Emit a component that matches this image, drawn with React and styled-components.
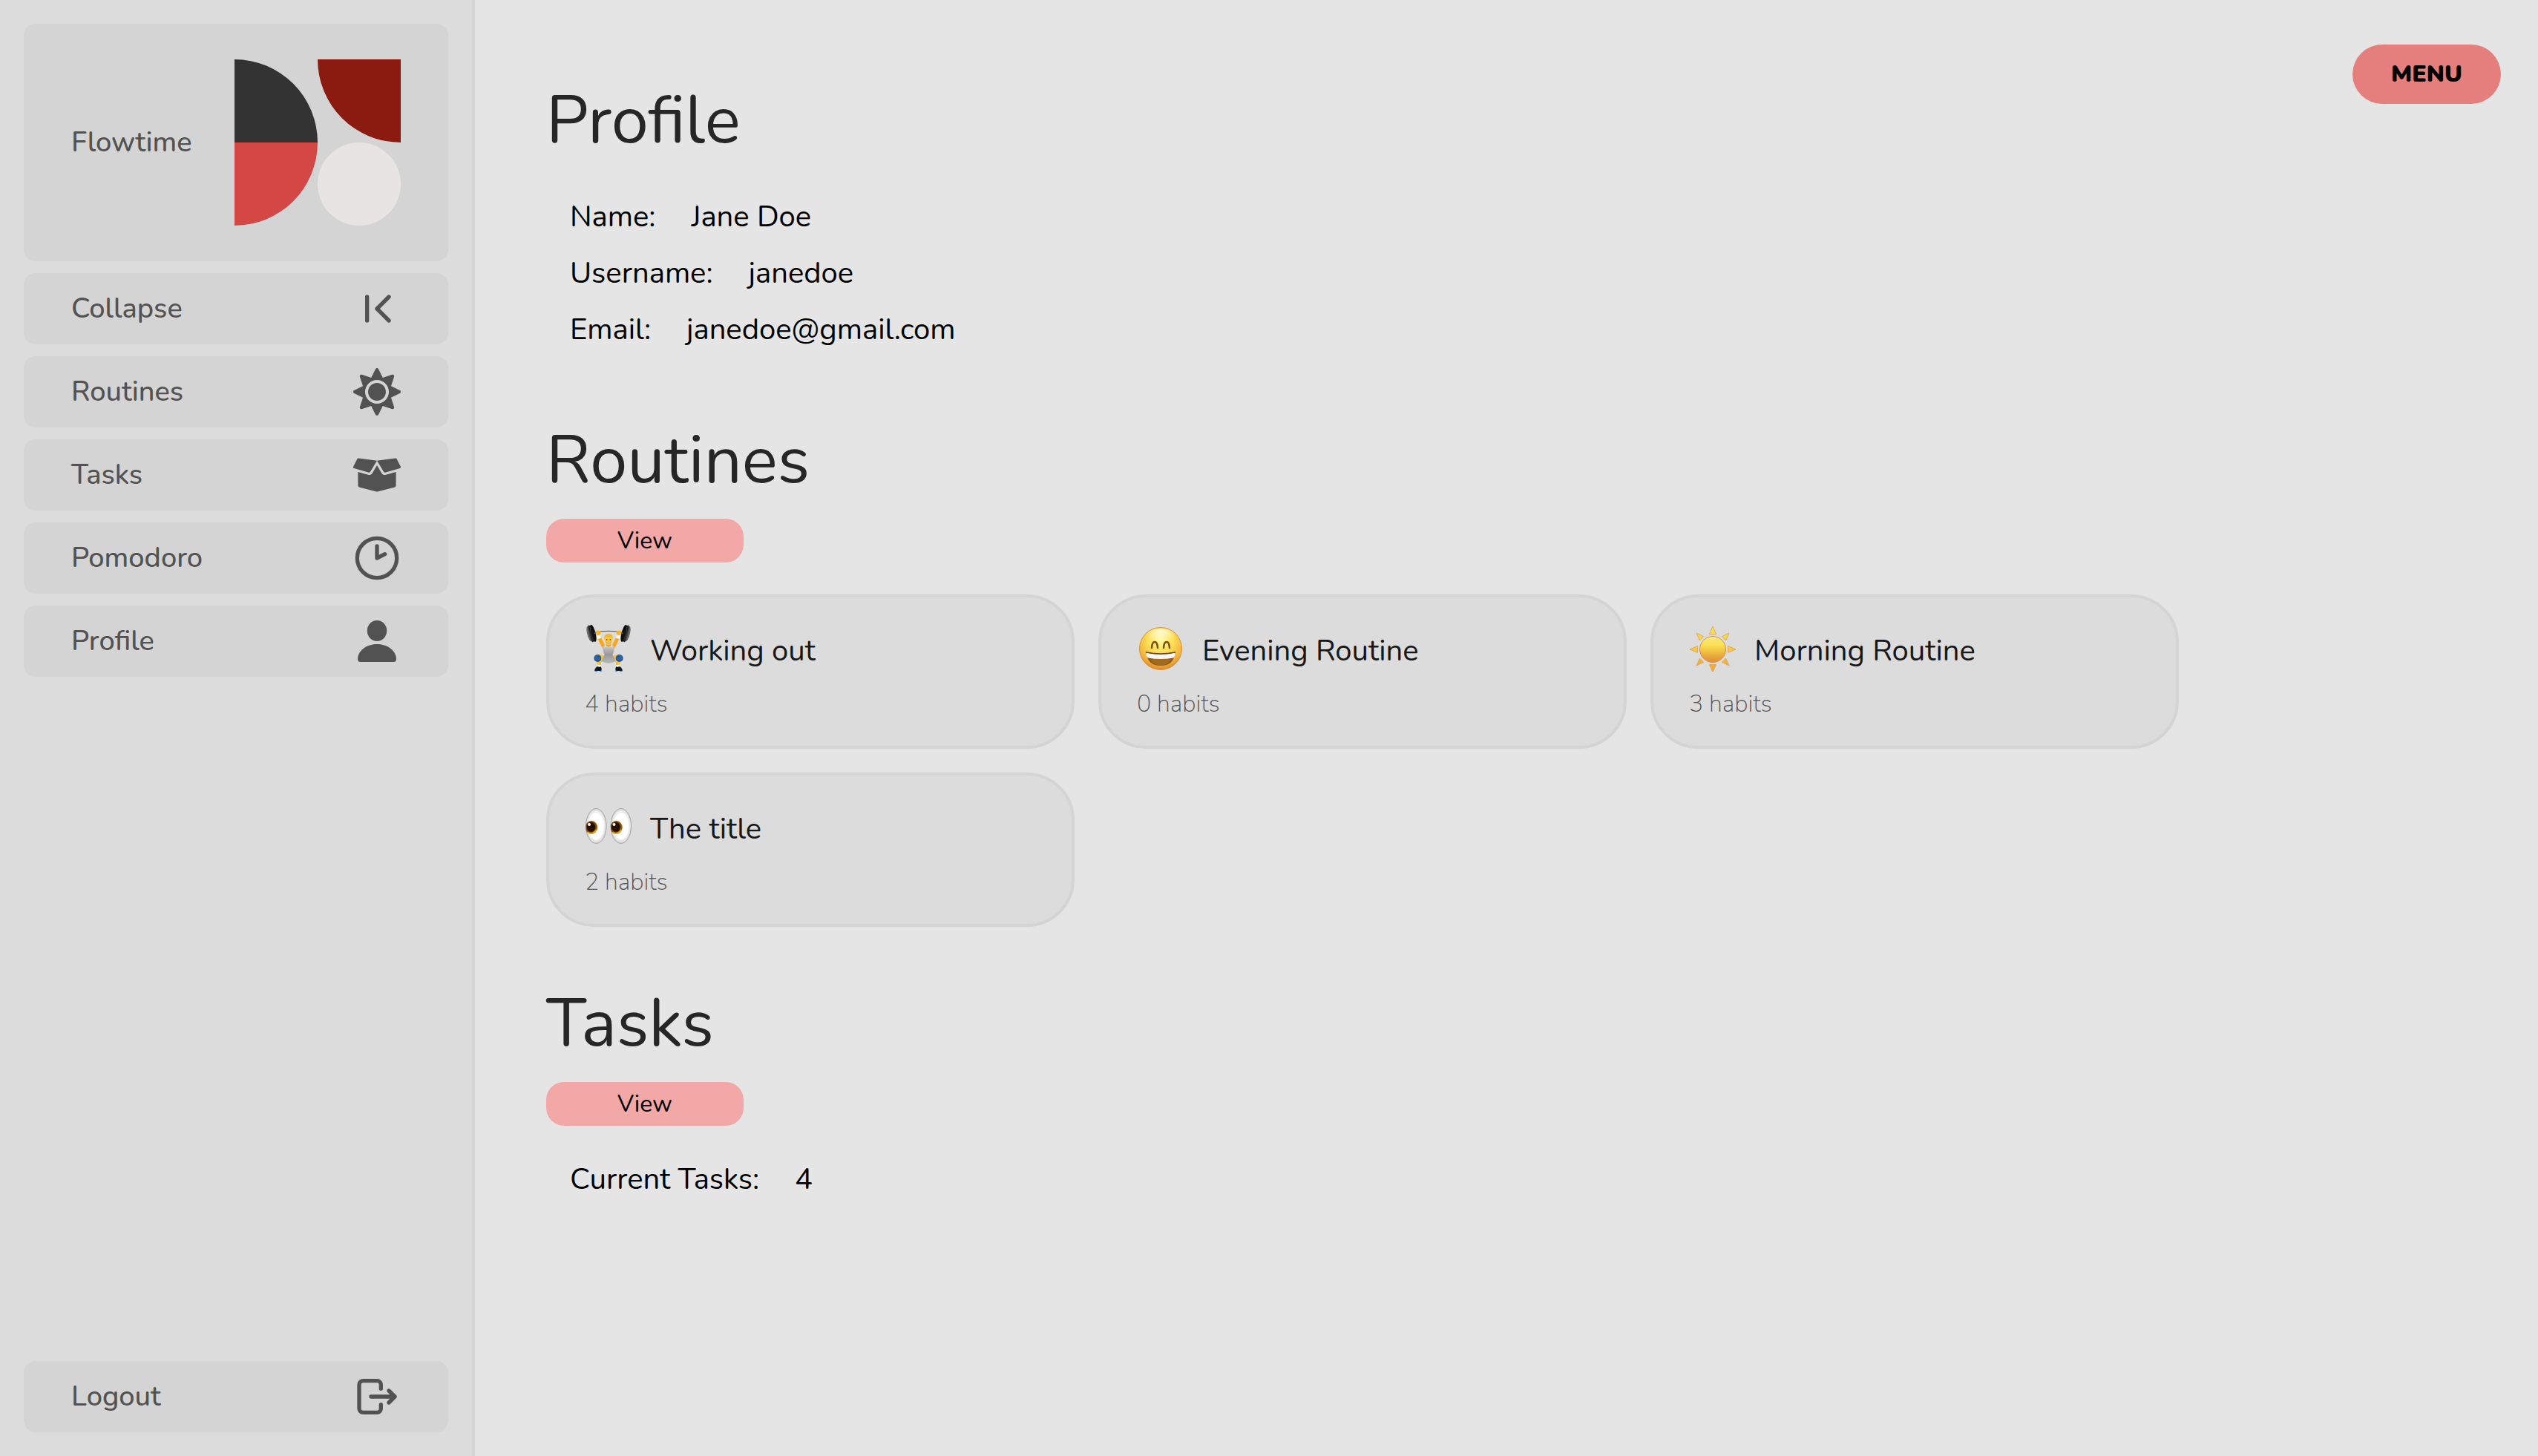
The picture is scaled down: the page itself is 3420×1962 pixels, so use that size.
import React from "react";
import styled, { createGlobalStyle } from "styled-components";
import { FaSun, FaBoxOpen } from "react-icons/fa";

const GlobalStyle = createGlobalStyle`
  *, *::before, *::after { box-sizing: border-box; }
  body {
    margin: 0;
    background: #e5e5e5;
    color: #000;
    font-family: Nunito, Lato, "Open Sans", sans-serif;
    font-size: 40px;
  }
  button { font-family: inherit; border: 0; margin: 0; cursor: pointer; }
  a { text-decoration: none; }
`;

const Page = styled.div`
  display: flex;
  min-height: 100vh;
`;

const Sidebar = styled.nav`
  flex: none;
  display: flex;
  flex-direction: column;
  gap: 16px;
  width: 640px;
  padding: 32px;
  background: #dcdcdc;
  border-right: 4px solid #d4d4d4;
`;

const SidebarItem = styled.a`
  display: flex;
  align-items: center;
  justify-content: space-between;
  width: 100%;
  padding: ${(p) => (p.$brand ? "48px 64px" : "16px 64px")};
  margin-top: ${(p) => (p.$last ? "auto" : "0")};
  border-radius: 16px;
  background: #d4d4d4;
  color: #525252;
  font-size: 38px;
  font-weight: 500;
  line-height: 56px;
  text-align: left;

  svg { display: block; flex: none; }
`;

const Main = styled.main`
  flex: 1;
  min-width: 0;
  display: flex;
  flex-direction: column;
  gap: 64px;
  padding: 96px;
`;

const Section = styled.section`
  display: flex;
  flex-direction: column;
  align-items: flex-start;
  gap: 11px;
`;

const Heading = styled.h1`
  margin: 0;
  color: #262626;
  font-size: 90px;
  font-weight: 400;
  line-height: 134px;
`;

const Fields = styled.dl`
  margin: 0;
  padding: 13px 32px 8px;
`;

const Field = styled.div`
  display: flex;
  gap: 48px;
  line-height: 76px;

  dt, dd { margin: 0; }
`;

const ViewButton = styled.button`
  width: 266px;
  height: 59px;
  padding: 0;
  border-radius: 24px;
  background: #f2a8a7;
  color: #000;
  font-size: 32px;

  && { margin-bottom: 10px; }
`;

const Cards = styled.div`
  display: flex;
  flex-wrap: wrap;
  gap: 32px;
  padding-top: 22px;
`;

const Card = styled.article`
  width: 712px;
  padding: 36px 48px 34px;
  border: 4px solid #d4d4d4;
  border-radius: 64px;
  background: #dcdcdc;
`;

const CardTop = styled.div`
  display: flex;
  gap: 24px;
  margin-bottom: 14px;
`;

const CardTitle = styled.h2`
  margin: 0;
  color: #171717;
  font-size: 40px;
  font-weight: 400;
  line-height: 72px;
`;

const Habits = styled.p`
  margin: 0;
  color: #525252;
  font-size: 32px;
  font-weight: 200;
  line-height: 44px;
`;

const MenuButton = styled.button`
  position: absolute;
  top: 60px;
  right: 50px;
  width: 200px;
  height: 80px;
  padding: 0 0 2px;
  border-radius: 40px;
  background: #e57f7d;
  color: #000;
  font-size: 32px;
  font-weight: 900;
`;

function Logo() {
  return (
    <svg width="224" height="224" viewBox="0 0 224 224" aria-hidden="true">
      <path d="M0 0A112 112 0 0 1 112 112H0Z" fill="#333333" />
      <path d="M112 0H224V112A112 112 0 0 1 112 0Z" fill="#8b1b11" />
      <path d="M0 112H112A112 112 0 0 1 0 224Z" fill="#d34844" />
      <circle cx="168" cy="168" r="56" fill="#e8e4e3" />
    </svg>
  );
}

function LineIcon({ children }) {
  return (
    <svg width="64" height="64" viewBox="0 0 24 24" fill="none" stroke="currentColor" strokeWidth="2" strokeLinecap="round" strokeLinejoin="round" aria-hidden="true">
      {children}
    </svg>
  );
}

const CollapseIcon = () => (
  <LineIcon>
    <path d="M7 6v12M18 6l-6 6 6 6" />
  </LineIcon>
);

const ClockIcon = () => (
  <LineIcon>
    <circle cx="12" cy="12" r="10" />
    <path d="M12 6v6l4-2" />
  </LineIcon>
);

const LogoutIcon = () => (
  <LineIcon>
    <path d="M14 8V6a2 2 0 0 0-2-2H5a2 2 0 0 0-2 2v12a2 2 0 0 0 2 2h7a2 2 0 0 0 2-2v-2" />
    <path d="M9 12h12M18 9l3 3-3 3" />
  </LineIcon>
);

const PersonIcon = () => (
  <svg width="64" height="64" viewBox="0 0 24 24" fill="currentColor" aria-hidden="true">
    <ellipse cx="12" cy="6.75" rx="4.95" ry="5.25" />
    <path d="M12 13.5c5.6 0 9.75 3.6 9.75 7.6 0 .9-.5 1.4-1.3 1.4H3.55c-.8 0-1.3-.5-1.3-1.4 0-4 4.15-7.6 9.75-7.6Z" />
  </svg>
);

function LifterEmoji() {
  return (
    <svg width="64" height="64" viewBox="54 63 192 192" role="img" aria-label="Weightlifter">
      <defs>
        <linearGradient id="suit" x1="0" y1="0" x2="0" y2="1">
          <stop offset="0" stopColor="#c9c9c9" />
          <stop offset="0.5" stopColor="#989898" />
          <stop offset="1" stopColor="#b9b9b9" />
        </linearGradient>
        <linearGradient id="plate" x1="0" y1="0" x2="1" y2="0">
          <stop offset="0" stopColor="#666666" />
          <stop offset="0.5" stopColor="#1c1c1c" />
          <stop offset="1" stopColor="#0b0b0b" />
        </linearGradient>
      </defs>
      <path d="M88 98Q150 84 212 98" fill="none" stroke="#4a4a4a" strokeWidth="3" />
      {[false, true].map((flip) => (
        <g key={String(flip)} transform={flip ? "translate(300 0) scale(-1 1)" : undefined}>
          <g transform="rotate(-14 81 102)">
            <ellipse cx="72" cy="100" rx="8" ry="31" fill="#6b6b6b" />
            <ellipse cx="79" cy="101" rx="10" ry="35" fill="url(#plate)" />
            <ellipse cx="88" cy="102" rx="10" ry="36" fill="#111111" />
            <path d="M82 74q-6 28 0 56" fill="none" stroke="#4d4d4d" strokeWidth="2" />
          </g>
          <circle cx="93" cy="100" r="3" fill="#2455b8" />
          <path d="M103 112L115 108L134 144Q132 160 128 164Q115 145 103 112Z" fill="#f6a623" />
          <path d="M102 110L117 108L120 119L106 123Z" fill="#ffffff" />
          <rect x="98" y="89" width="20" height="17" rx="7" fill="#f0a81f" />
          <path d="M101 94h15M101 99h15" stroke="#ffd45a" strokeWidth="2" />
          <path d="M136 192L112 185Q96 184 96 198L106 230L119 232L121 212L138 214Z" fill="#fdbf33" />
          <circle cx="106" cy="201" r="15" fill="#2d5f9f" />
          <path d="M93 206Q106 218 120 206" fill="none" stroke="#234a80" strokeWidth="2" />
          <path d="M106 227L120 229L118 237L103 236Z" fill="#ffffff" />
          <path d="M104 234Q112 238 118 235Q124 240 121 252H94Q92 245 104 234Z" fill="#161616" />
          <path d="M94 253h11M114 253h8" stroke="#2b78d0" strokeWidth="3" />
        </g>
      ))}
      <path d="M126 152Q150 162 174 152Q173 176 166 187L180 213Q150 229 120 213L134 187Q127 174 126 152Z" fill="url(#suit)" />
      <path d="M140 143h20v8q-10 8-20 0Z" fill="#f2a51f" />
      <path d="M134 122Q134 104 150 104Q166 104 166 122Q166 145 150 147Q134 145 134 122Z" fill="#fcc53c" />
      <path d="M132 125Q129 102 150 101Q171 102 168 125Q165 118 164 112Q150 119 138 112Q135 118 132 125Z" fill="#e7b94c" />
      <circle cx="143" cy="126" r="2.4" fill="#3d2a14" />
      <circle cx="157" cy="126" r="2.4" fill="#3d2a14" />
      <path d="M143 137Q150 134 157 137L155 141H145Z" fill="#ffffff" stroke="#8a4b17" strokeWidth="1" />
    </svg>
  );
}

function GrinEmoji() {
  return (
    <svg width="64" height="64" viewBox="0 0 64 64" role="img" aria-label="Grinning face">
      <defs>
        <radialGradient id="face" cx="0.5" cy="0.3" r="0.72">
          <stop offset="0" stopColor="#fffb9a" />
          <stop offset="0.4" stopColor="#fce057" />
          <stop offset="0.78" stopColor="#f2b13c" />
          <stop offset="1" stopColor="#d98325" />
        </radialGradient>
        <radialGradient id="shine" cx="0.5" cy="0.2" r="0.6">
          <stop offset="0" stopColor="#ffffff" stopOpacity="0.7" />
          <stop offset="1" stopColor="#ffffff" stopOpacity="0" />
        </radialGradient>
      </defs>
      <circle cx="32" cy="33" r="28.5" fill="url(#face)" stroke="#dc8f35" strokeWidth="1" />
      <ellipse cx="32" cy="17" rx="20" ry="11" fill="url(#shine)" />
      <path d="M20 32Q20.500 24 24 24Q27.500 24 28 32M36 32Q36.500 24 40 24Q43.500 24 44 32" fill="none" stroke="#85500f" strokeWidth="2.600" strokeLinecap="round" />
      <path d="M12.500 38Q32 42 51.500 38Q50 56 32 56Q14 56 12.500 38Z" fill="#8a5a18" />
      <path d="M18 48Q32 44 46 48Q41 55.500 32 55.500Q23 55.500 18 48Z" fill="#a06a20" />
      <path d="M12.700 38.500Q32 43 51.300 38.500Q51.500 44.500 49 45.500Q32 48.500 15 45.500Q12.500 44.500 12.700 38.500Z" fill="#f7f7f7" />
      <path d="M12.500 38Q32 42 51.500 38" fill="none" stroke="#6e410c" strokeWidth="1.400" strokeLinecap="round" />
    </svg>
  );
}

function SunEmoji() {
  return (
    <svg width="64" height="64" viewBox="0 0 64 64" role="img" aria-label="Sun">
      <defs>
        <linearGradient id="disc" x1="0" y1="0" x2="0" y2="1">
          <stop offset="0" stopColor="#f8e98a" />
          <stop offset="0.35" stopColor="#fae04f" />
          <stop offset="0.8" stopColor="#e6a33a" />
          <stop offset="1" stopColor="#dc9236" />
        </linearGradient>
        <linearGradient id="rays" gradientUnits="userSpaceOnUse" x1="0" y1="2" x2="0" y2="64">
          <stop offset="0" stopColor="#fbe94e" />
          <stop offset="1" stopColor="#f0a63a" />
        </linearGradient>
      </defs>
      <path
        d="M32 3L36.500 13.500H27.500ZM32 65L36.500 54.500H27.500ZM63 34L52.500 29.500V38.500ZM1 34L11.500 29.500V38.500ZM54 12L44.500 16.500L49.500 22ZM10 12L19.500 16.500L14.500 22ZM54 56L44.500 51.500L49.500 46ZM10 56L19.500 51.500L14.500 46Z"
        fill="url(#rays)"
        stroke="#dba04a"
        strokeWidth="0.800"
      />
      <circle cx="32" cy="34" r="17.500" fill="url(#disc)" stroke="#df8a3c" strokeWidth="1" />
    </svg>
  );
}

function EyesEmoji() {
  return (
    <svg width="64" height="64" viewBox="0 0 64 64" role="img" aria-label="Eyes">
      <defs>
        <radialGradient id="white" cx="0.5" cy="0.5" r="0.5">
          <stop offset="0.7" stopColor="#ffffff" />
          <stop offset="1" stopColor="#d2d2d2" />
        </radialGradient>
        <radialGradient id="iris" cx="0.45" cy="0.45" r="0.55">
          <stop offset="0.55" stopColor="#5a2c08" />
          <stop offset="1" stopColor="#b57a14" />
        </radialGradient>
        <clipPath id="eye"><ellipse cx="15.300" cy="32" rx="14" ry="23.500" /></clipPath>
      </defs>
      {[0, 33.5].map((x) => (
        <g key={x} transform={`translate(${x} 0)`}>
          <ellipse cx="15.300" cy="32" rx="13.800" ry="23.500" fill="url(#white)" stroke="#a9a9a9" strokeWidth="1" />
          <g clipPath="url(#eye)">
            <ellipse cx="9" cy="34" rx="8.300" ry="9" fill="url(#iris)" />
            <path d="M4 40.500Q10 45 16 37" fill="none" stroke="#e0b02a" strokeWidth="1.800" />
            <ellipse cx="8.500" cy="33.500" rx="5.600" ry="6.300" fill="#240d02" />
            <circle cx="6" cy="30" r="2" fill="#ffffff" />
          </g>
        </g>
      ))}
    </svg>
  );
}

const links = [
  { label: "Routines", icon: <FaSun size={64} /> },
  { label: "Tasks", icon: <FaBoxOpen size={64} /> },
  { label: "Pomodoro", icon: <ClockIcon /> },
  { label: "Profile", icon: <PersonIcon /> },
];

const profile = [
  ["Name:", "Jane Doe"],
  ["Username:", "janedoe"],
  ["Email:", "janedoe@gmail.com"],
];

const routines = [
  { title: "Working out", habits: 4, emoji: <LifterEmoji /> },
  { title: "Evening Routine", habits: 0, emoji: <GrinEmoji /> },
  { title: "Morning Routine", habits: 3, emoji: <SunEmoji /> },
  { title: "The title", habits: 2, emoji: <EyesEmoji /> },
];

function FieldRow({ label, value }) {
  return (
    <Field>
      <dt>{label}</dt>
      <dd>{value}</dd>
    </Field>
  );
}

export default function App() {
  return (
    <Page>
      <GlobalStyle />
      <Sidebar>
        <SidebarItem href="#home" $brand>
          Flowtime
          <Logo />
        </SidebarItem>
        <SidebarItem as="button" type="button">
          Collapse
          <CollapseIcon />
        </SidebarItem>
        {links.map(({ label, icon }) => (
          <SidebarItem key={label} href={`#${label.toLowerCase()}`}>
            {label}
            {icon}
          </SidebarItem>
        ))}
        <SidebarItem as="button" type="button" $last>
          Logout
          <LogoutIcon />
        </SidebarItem>
      </Sidebar>
      <Main>
        <Section>
          <Heading>Profile</Heading>
          <Fields>
            {profile.map(([label, value]) => (
              <FieldRow key={label} label={label} value={value} />
            ))}
          </Fields>
        </Section>
        <Section>
          <Heading>Routines</Heading>
          <ViewButton type="button">View</ViewButton>
          <Cards>
            {routines.map(({ title, habits, emoji }) => (
              <Card key={title}>
                <CardTop>
                  {emoji}
                  <CardTitle>{title}</CardTitle>
                </CardTop>
                <Habits>{habits} habits</Habits>
              </Card>
            ))}
          </Cards>
        </Section>
        <Section>
          <Heading>Tasks</Heading>
          <ViewButton type="button">View</ViewButton>
          <Fields>
            <FieldRow label="Current Tasks:" value="4" />
          </Fields>
        </Section>
      </Main>
      <MenuButton type="button">MENU</MenuButton>
    </Page>
  );
}
